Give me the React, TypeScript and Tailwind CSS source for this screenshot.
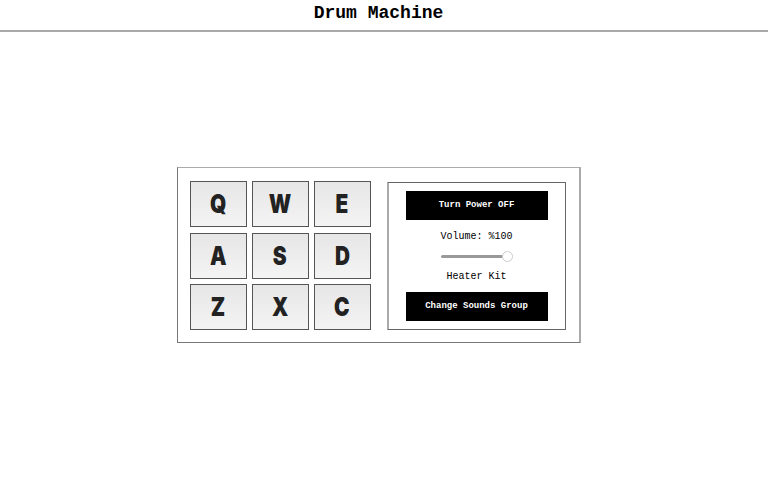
import React from "react";

const keys = ["Q", "W", "E", "A", "S", "D", "Z", "X", "C"];

export default function App() {
  return (
    <div className="min-h-[500px] w-full bg-white" style={{ fontFamily: '"Liberation Mono", monospace' }}>
      <header className="h-[32px] border-b-2 border-[#a9a9a9] flex items-start justify-center pr-[11px]">
        <h1 className="text-[18px] font-bold text-black leading-none pt-[4px]">Drum Machine</h1>
      </header>
      <main className="flex justify-center pt-[135px] pr-[11px]">
        <div className="flex items-start border border-[#777] border-t-[#aaa] border-r-2 border-r-[#aaa] pl-[12px] pr-[13px] pt-[13px] pb-[12px] gap-[16px]">
          <div className="grid grid-cols-[57px_57px_57px] grid-rows-[46px_46px_46px] gap-x-[5px] gap-y-[5.5px]">
            {keys.map((k) => (
              <div
                key={k}
                className="flex items-center justify-center border border-[#555] bg-gradient-to-b from-[#e6e6e6] to-[#f4f4f4]"
              >
                <span
                  className="inline-block scale-x-[0.8] text-[26px] font-black text-[#222] leading-none"
                  style={{ fontFamily: "Inter, sans-serif" }}
                >
                  {k}
                </span>
              </div>
            ))}
          </div>
          <div className="mt-[1px] w-[179px] h-[148px] border border-[#666] border-l-2 border-l-[#aaa] flex flex-col items-center py-[8px]">
            <button className="w-[142px] h-[29px] bg-black text-white text-[9px] font-bold">Turn Power OFF</button>
            <div className="mt-[12px] text-[10px] text-black leading-none">Volume: %100</div>
            <div className="mt-[9px] relative w-[72px] h-[11px] flex items-center">
              <div className="h-[3px] w-[67px] bg-[#999] rounded-full"></div>
              <div className="absolute right-0 top-0 w-[11px] h-[11px] rounded-full bg-white border border-[#ccc]"></div>
            </div>
            <div className="mt-[10px] text-[10px] text-black leading-none">Heater Kit</div>
            <button className="mt-auto w-[142px] h-[29px] bg-black text-white text-[9px] font-bold">Change Sounds Group</button>
          </div>
        </div>
      </main>
    </div>
  );
}
